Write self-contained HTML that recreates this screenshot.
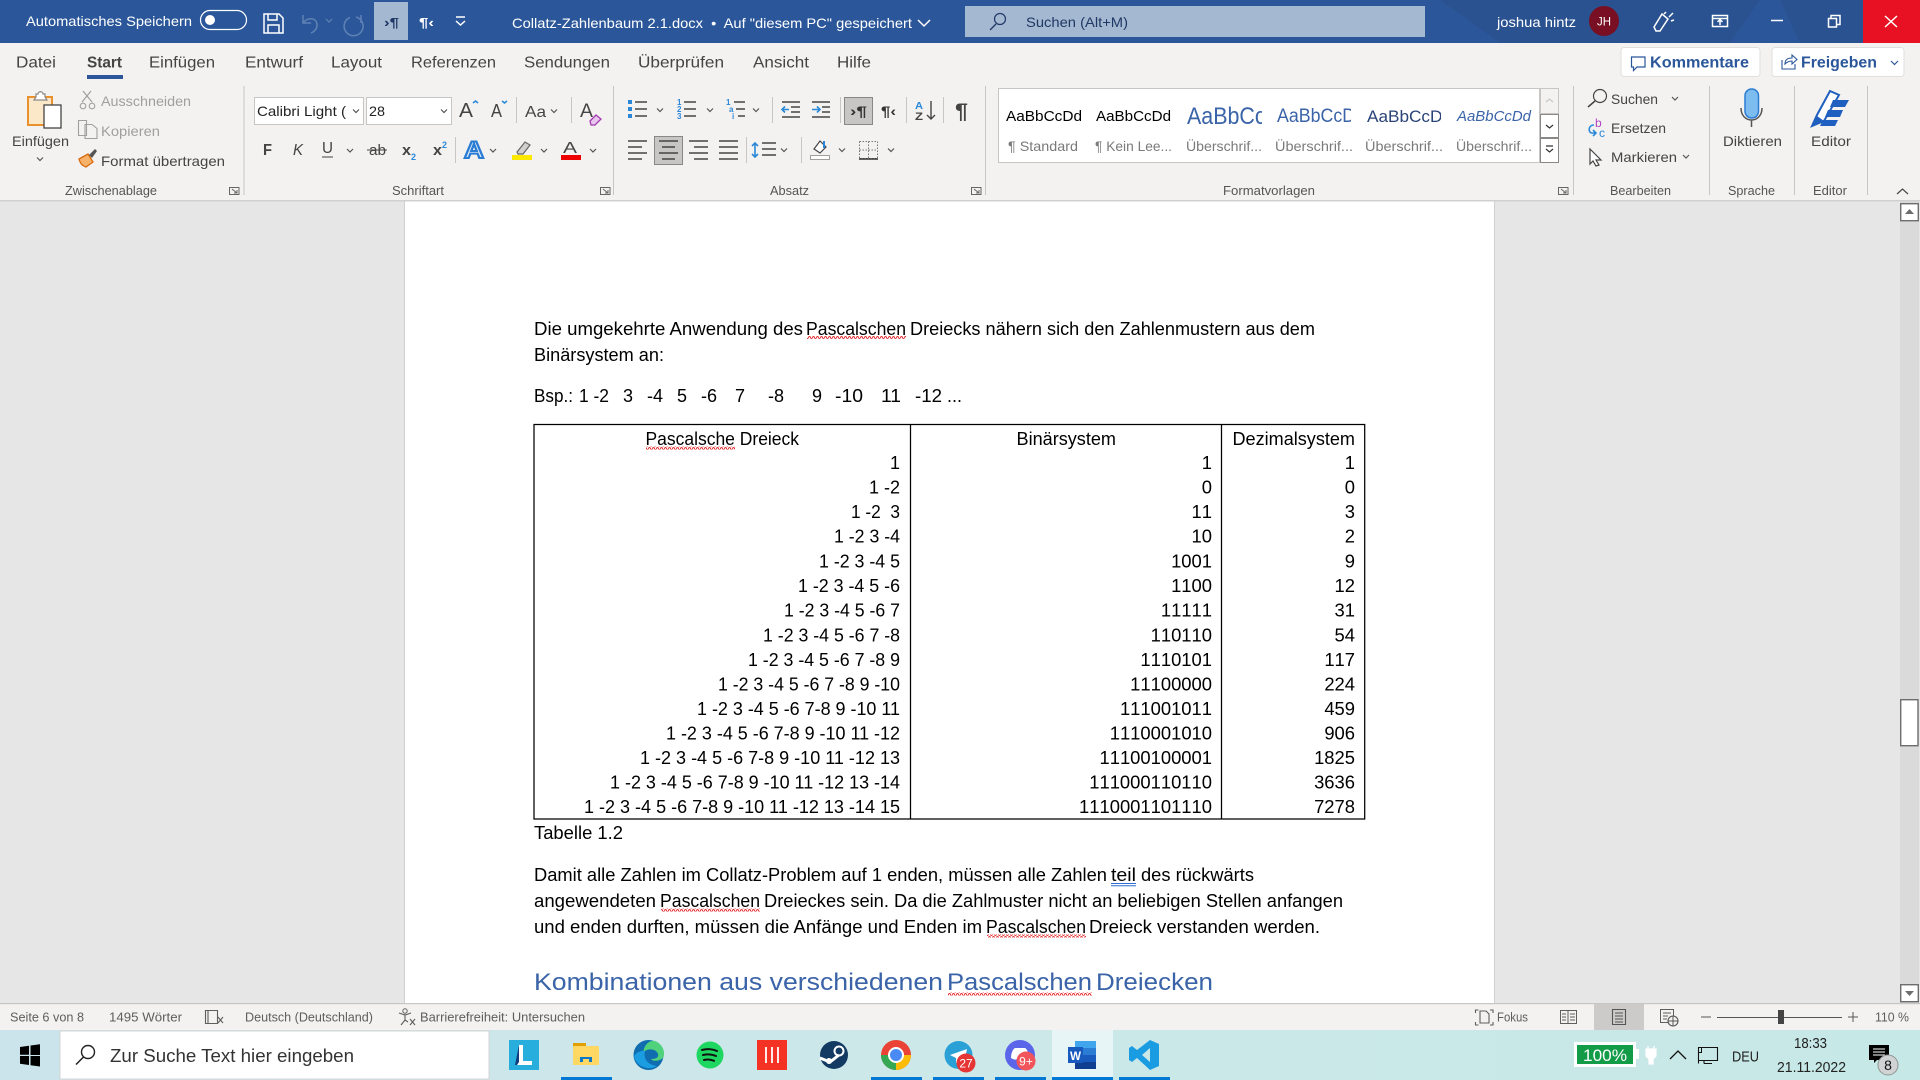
<!DOCTYPE html>
<html lang="de"><head><meta charset="utf-8"><title>Collatz-Zahlenbaum 2.1.docx</title>
<style>
html,body{margin:0;padding:0;width:1920px;height:1080px;overflow:hidden;background:#e6e6e6}
svg{display:block;position:absolute;left:0;top:0}
text{font-family:"Liberation Sans",sans-serif;font-size:14px;fill:#444;white-space:pre}
.t{fill:#fff}
.tab{font-size:16px;fill:#444}
.lab{font-size:12.5px;fill:#555}
.g{fill:#a19f9d}
.d{font-size:18px;fill:#000}
.e{text-anchor:end}
.n{font-size:18.4px;fill:#000;text-anchor:end;font-kerning:none}
.st{font-size:12.5px;fill:#605e5c}
.sv{font-size:14px;fill:#7a7a7a}
.ln{stroke:#444;stroke-width:1.4;fill:none}
.blue{stroke:#2b88d8;stroke-width:1.6;fill:none}
.ch{stroke:#555;stroke-width:1.2;fill:none}
.w{stroke:#fff;stroke-width:1.5;fill:none}
.sep{stroke:#c8c6c4;stroke-width:1}
</style></head><body>
<svg width="1920" height="1080" viewBox="0 0 1920 1080" xmlns="http://www.w3.org/2000/svg">
<defs>
<pattern id="wv" width="4" height="3" patternUnits="userSpaceOnUse"><path d="M0 2.4 L1 .6 L2 .6 L3 2.4 L4 2.4" fill="none" stroke="#e02020" stroke-width=".9"/></pattern>
<linearGradient id="tb" x1="0" x2="1" y1="0" y2="0"><stop offset="0" stop-color="#cbe3ea"/><stop offset=".5" stop-color="#cce8e9"/><stop offset="1" stop-color="#c6e8e6"/></linearGradient>
<clipPath id="c3"><rect x="1180" y="90" width="82" height="44"/></clipPath>
<clipPath id="c4"><rect x="1270" y="90" width="81" height="44"/></clipPath>
<clipPath id="c5"><rect x="1360" y="90" width="81" height="44"/></clipPath>
</defs>

<!-- title bar -->
<rect width="1920" height="43" fill="#2b579a"/>
<path d="M1440 0H1760L1730 43H1500Z M1780 0H1863V43H1800Z" fill="#2a4d85" opacity=".45"/>
<text class="t" x="26" y="26" textLength="166" lengthAdjust="spacingAndGlyphs">Automatisches Speichern</text>
<rect x="200.5" y="10.5" width="46" height="19" rx="9.5" fill="none" stroke="#fff" stroke-width="1.2"/><circle cx="210" cy="20" r="5" fill="#fff"/>
<path class="w" d="M264 14h15l4 4v15h-19zM268 14v6h9v-6M268 33v-8h11v8"/>
<path d="M303 15v8h8M303 23c4-6 14-6 14 2 0 4-3 7-6 8" fill="none" stroke="#5f82b5" stroke-width="1.5"/>
<path d="M326 19l3 3 3-3" fill="none" stroke="#5f82b5" stroke-width="1.2"/>
<path d="M361 15v8h-0M356 17a9.500 9.500 0 1 1-6 .4" fill="none" stroke="#5f82b5" stroke-width="1.5"/>
<rect x="374" y="2" width="34" height="38" fill="#a5b8d2"/>
<text x="384" y="27" style="font-size:13px;fill:#1f3864;font-weight:bold" textLength="15" lengthAdjust="spacingAndGlyphs">›¶</text>
<text class="t" x="419" y="27" style="font-size:13px;font-weight:bold" textLength="15" lengthAdjust="spacingAndGlyphs">¶‹</text>
<path class="w" d="M456 17h9M456 21l4.500 4 4.500-4" stroke-width="1.1"/>
<text class="t" x="512" y="28" textLength="400" lengthAdjust="spacingAndGlyphs">Collatz-Zahlenbaum 2.1.docx  •  Auf "diesem PC" gespeichert</text>
<path class="w" d="M918 20l6 6 6-6" stroke-width="1.2"/>
<rect x="965" y="6" width="460" height="31" fill="#a5b8d2"/>
<circle cx="1000" cy="19" r="5.500" fill="none" stroke="#1f3864" stroke-width="1.2"/><path d="M996 24l-6 6" stroke="#1f3864" stroke-width="1.3"/>
<text x="1026" y="27" style="fill:#1f3864" textLength="102" lengthAdjust="spacingAndGlyphs">Suchen (Alt+M)</text>
<text class="t" x="1497" y="27" textLength="79" lengthAdjust="spacingAndGlyphs">joshua hintz</text>
<circle cx="1604" cy="21" r="15" fill="#780f22"/>
<text class="t" x="1597" y="25.500" style="font-size:11.500px" textLength="14" lengthAdjust="spacingAndGlyphs">JH</text>
<path class="w" d="M1654 27l8-13 6 5-8 12-4 0zM1664 14l2-2M1669 17l4-4M1671 21l3-1" stroke-width="1.4"/>
<path class="w" d="M1712.500 15.500h15v11h-15zM1712.500 18.500h15M1720 25v-5M1717.500 22l2.500-2.500 2.500 2.500" stroke-width="1.2"/>
<path class="w" d="M1771 20.500h12" stroke-width="1.4"/>
<path class="w" d="M1828.500 18.500h8v8.500h-8zM1831 18v-2.500h9v9h-3" stroke-width="1.200"/>
<rect x="1863" width="57" height="43" fill="#e81123"/>
<path d="M1885 16l12 11M1897 16l-12 11" stroke="#fff" stroke-width="1.500"/>

<!-- ribbon -->
<rect y="43" width="1920" height="158" fill="#f3f2f1"/>
<rect y="200" width="1920" height="1.500" fill="#d2d0ce"/>
<text class="tab" x="16" y="67.500" textLength="40" lengthAdjust="spacingAndGlyphs">Datei</text>
<text class="tab" x="87" y="67.500" style="font-weight:bold" textLength="35" lengthAdjust="spacingAndGlyphs">Start</text>
<rect x="87" y="75" width="36" height="4" fill="#2b579a"/>
<text class="tab" x="149" y="67.500" textLength="66" lengthAdjust="spacingAndGlyphs">Einfügen</text>
<text class="tab" x="245" y="67.500" textLength="58" lengthAdjust="spacingAndGlyphs">Entwurf</text>
<text class="tab" x="331" y="67.500" textLength="51" lengthAdjust="spacingAndGlyphs">Layout</text>
<text class="tab" x="411" y="67.500" textLength="85" lengthAdjust="spacingAndGlyphs">Referenzen</text>
<text class="tab" x="524" y="67.500" textLength="86" lengthAdjust="spacingAndGlyphs">Sendungen</text>
<text class="tab" x="638" y="67.500" textLength="86" lengthAdjust="spacingAndGlyphs">Überprüfen</text>
<text class="tab" x="753" y="67.500" textLength="56" lengthAdjust="spacingAndGlyphs">Ansicht</text>
<text class="tab" x="837" y="67.500" textLength="34" lengthAdjust="spacingAndGlyphs">Hilfe</text>

<rect x="1621" y="47.500" width="139" height="29" rx="3" fill="#fff" stroke="#e1dfdd"/>
<path d="M1631.500 57h13.500v10h-8l-3.500 3.500v-3.500h-2z" fill="none" stroke="#2b579a" stroke-width="1.200"/>
<text x="1650" y="67.500" style="font-size:16px;font-weight:bold;fill:#2b579a" textLength="99" lengthAdjust="spacingAndGlyphs">Kommentare</text>
<rect x="1772" y="47.500" width="132" height="29" rx="3" fill="#fff" stroke="#e1dfdd"/>
<path d="M1782 60v9h13v-5M1785 64c0-5 3-6 7-6v-3l5 4.500-5 4.500v-3c-3 0-5 1-7 3z" fill="none" stroke="#2b579a" stroke-width="1.100"/>
<text x="1801" y="67.500" style="font-size:16px;font-weight:bold;fill:#2b579a" textLength="76" lengthAdjust="spacingAndGlyphs">Freigeben</text>
<path d="M1891 61l3.500 3.500 3.500-3.500" fill="none" stroke="#2b579a" stroke-width="1.200"/>

<!-- separators -->
<g class="sep"><path d="M244 86v109M613.500 86v109M985.500 86v109M1573.500 86v109M1709.500 86v109M1794.500 86v109M1867.500 86v109"/></g>
<!-- group labels -->
<text class="lab" x="65" y="195" textLength="92" lengthAdjust="spacingAndGlyphs">Zwischenablage</text>
<text class="lab" x="392" y="195" textLength="52" lengthAdjust="spacingAndGlyphs">Schriftart</text>
<text class="lab" x="770" y="195" textLength="39" lengthAdjust="spacingAndGlyphs">Absatz</text>
<text class="lab" x="1223" y="195" textLength="92" lengthAdjust="spacingAndGlyphs">Formatvorlagen</text>
<text class="lab" x="1610" y="195" textLength="61" lengthAdjust="spacingAndGlyphs">Bearbeiten</text>
<text class="lab" x="1728" y="195" textLength="47" lengthAdjust="spacingAndGlyphs">Sprache</text>
<text class="lab" x="1813" y="195" textLength="34" lengthAdjust="spacingAndGlyphs">Editor</text>
<g fill="none" stroke="#666" stroke-width="1">
<path d="M229.500 187.500h9.500v7h-9.500z M232 189l5 4M237 190v3h-3"/>
<path d="M600.500 187.500h9.500v7h-9.500z M603 189l5 4M608 190v3h-3"/>
<path d="M971.500 187.500h9.500v7h-9.500z M974 189l5 4M979 190v3h-3"/>
<path d="M1558.500 187.500h9.500v7h-9.500z M1561 189l5 4M1566 190v3h-3"/>
<path d="M1897 194l5.500-5 5.500 5" stroke="#444" stroke-width="1.200"/>
</g>

<!-- clipboard group -->
<path d="M28 97h24v28h-24z" fill="#fbe8c8" stroke="#e8912d" stroke-width="2"/>
<path d="M36 97v-3h2c0-3 5-3 5 0h2v3l2 3h-13z" fill="#fff" stroke="#8a8886" stroke-width="1.200"/>
<rect x="44" y="105" width="17" height="23" fill="#fff" stroke="#444" stroke-width="1.300"/>
<text x="12" y="146" textLength="57" lengthAdjust="spacingAndGlyphs">Einfügen</text>
<path class="ch" d="M37 157.500l3 3 3-3"/>
<path d="M83 91l9 11M91 91l-9 11" stroke="#a19f9d" stroke-width="1.200"/><circle cx="83" cy="106" r="2.800" fill="none" stroke="#a19f9d" stroke-width="1.100"/><circle cx="92" cy="106" r="2.800" fill="none" stroke="#a19f9d" stroke-width="1.100"/>
<text class="g" x="101" y="106" textLength="90" lengthAdjust="spacingAndGlyphs">Ausschneiden</text>
<path d="M78.500 120.500h8l0 15h-8zM85 124.500h7l5 4v10h-12z" fill="#f3f2f1" stroke="#a19f9d" stroke-width="1.100"/>
<text class="g" x="101" y="136" textLength="59" lengthAdjust="spacingAndGlyphs">Kopieren</text>
<path d="M79 159l9-5 5 8-7 5c-2-1-5-1-7-8z" fill="#f6b26b" stroke="#d86a0a" stroke-width="1.300"/><path d="M89 155l6-6 2 2-5 7z" fill="#555"/>
<text x="101" y="166" textLength="124" lengthAdjust="spacingAndGlyphs">Format übertragen</text>

<!-- font group -->
<rect x="254.500" y="97.500" width="109" height="27" fill="#fff" stroke="#c8c6c4"/>
<rect x="366.500" y="97.500" width="85" height="27" fill="#fff" stroke="#c8c6c4"/>
<text x="257" y="116" style="fill:#222" textLength="89" lengthAdjust="spacingAndGlyphs">Calibri Light (</text>
<text x="369" y="116" style="fill:#222" textLength="16" lengthAdjust="spacingAndGlyphs">28</text>
<path class="ch" d="M353 109.500l3 3 3-3M441 109.500l3 3 3-3"/>
<text x="459" y="117" style="font-size:20px" textLength="14" lengthAdjust="spacingAndGlyphs">A</text><path d="M473 103l2.500-2 2.500 2" class="blue" stroke-width="1.100"/>
<text x="491" y="117" style="font-size:18px" textLength="11" lengthAdjust="spacingAndGlyphs">A</text><path d="M502 101l2.500 2 2.500-2" class="blue" stroke-width="1.100"/>
<path class="sep" d="M516.500 97v26M571.500 97v26M455.500 137v26"/>
<text x="525" y="117" style="font-size:16px" textLength="21" lengthAdjust="spacingAndGlyphs">Aa</text>
<path class="ch" d="M551 109.500l3 3 3-3"/>
<text x="580" y="117" style="font-size:19px" textLength="13" lengthAdjust="spacingAndGlyphs">A</text>
<path d="M590 121l6-6 5 4-6 6h-4z" fill="#e9c6ee" stroke="#a33ab0" stroke-width="1.300"/>
<text x="263" y="155" style="font-size:16px;font-weight:bold" textLength="9" lengthAdjust="spacingAndGlyphs">F</text>
<text x="293" y="155" style="font-size:16px;font-style:italic" textLength="10" lengthAdjust="spacingAndGlyphs">K</text>
<text x="322" y="153" style="font-size:16px" textLength="11" lengthAdjust="spacingAndGlyphs">U</text><path d="M322 157h11" stroke="#444" stroke-width="1"/>
<path class="ch" d="M347 149l3 3 3-3"/>
<text x="369" y="155" style="font-size:15px" textLength="17" lengthAdjust="spacingAndGlyphs">ab</text><path d="M367 150h20" stroke="#444" stroke-width="1"/>
<text x="402" y="155" style="font-size:15px;font-weight:bold" textLength="9" lengthAdjust="spacingAndGlyphs">x</text><text x="411" y="160" style="font-size:9px;fill:#2b88d8;font-weight:bold">2</text>
<text x="433" y="155" style="font-size:15px;font-weight:bold" textLength="9" lengthAdjust="spacingAndGlyphs">x</text><text x="442" y="148" style="font-size:9px;fill:#2b88d8;font-weight:bold">2</text>
<text x="464" y="158" style="font-size:24px;font-weight:bold;fill:#dbeaf8;stroke:#2b7cd3;stroke-width:2" textLength="20" lengthAdjust="spacingAndGlyphs">A</text>
<path class="ch" d="M490 149l3 3 3-3M541 149l3 3 3-3M590 149l3 3 3-3"/>
<path d="M517 152l8-10 5 3-7 9h-5z" fill="#d2d0ce" stroke="#666" stroke-width="1.200"/>
<rect x="512" y="155" width="20" height="5" fill="#ffe800"/>
<text x="563" y="153" style="font-size:16px" textLength="14" lengthAdjust="spacingAndGlyphs">A</text>
<rect x="561" y="155" width="20" height="5" fill="#ee0000"/>

<!-- paragraph group -->
<g class="ln">
<path d="M635 102h12M635 109h12M635 116h12"/>
<path d="M684 102h12M684 109h12M684 116h12"/>
<path d="M734 102h11M736 109h9M738 116h7"/>
<path d="M782 102h18M791 107h9M791 112h9M782 117h18"/>
<path d="M812 102h18M822 107h8M822 112h8M812 117h18"/>
<path d="M628 141h19M628 147h14M628 153h19M628 159h14"/>
<path d="M689 141h19M694 147h14M689 153h19M694 159h14"/>
<path d="M719 141h19M719 147h19M719 153h19M719 159h19"/>
<path d="M762 143h14M762 149h14M762 155h14"/>
</g>
<g fill="#2b88d8"><rect x="628" y="100" width="4" height="4"/><rect x="628" y="107" width="4" height="4"/><rect x="628" y="114" width="4" height="4"/></g>
<g><text x="677" y="105" style="font-size:8px;fill:#2b88d8;font-weight:bold">1</text><text x="677" y="112" style="font-size:8px;fill:#2b88d8;font-weight:bold">2</text><text x="677" y="119" style="font-size:8px;fill:#2b88d8;font-weight:bold">3</text>
<text x="726" y="105" style="font-size:8px;fill:#2b88d8;font-weight:bold">1</text><text x="729" y="112" style="font-size:8px;fill:#2b88d8;font-weight:bold">a</text><text x="732" y="119" style="font-size:8px;fill:#2b88d8;font-weight:bold">i</text></g>
<path class="ch" d="M657 108.500l3 3 3-3M707 108.500l3 3 3-3M753 108.500l3 3 3-3M781 148.500l3 3 3-3M839 148.500l3 3 3-3M888 148.500l3 3 3-3"/>
<path class="blue" d="M789 109.500h-7M785 106.500l-3 3 3 3M812 109.500h8M817 106.500l3 3-3 3M755 143v14M752 146l3-3 3 3M752 154l3 3 3-3"/>
<path class="sep" d="M772.500 97v26M840.500 97v26M906.500 97v26M943.500 97v26M746.500 137v26M801.500 137v26"/>
<rect x="844.500" y="97.500" width="28" height="27" fill="#c8c6c4" stroke="#8a8886"/>
<text x="850" y="116" style="font-size:14px;font-weight:bold;fill:#333" textLength="17" lengthAdjust="spacingAndGlyphs">›¶</text>
<text x="881" y="116" style="font-size:14px;font-weight:bold;fill:#333" textLength="15" lengthAdjust="spacingAndGlyphs">¶‹</text>
<text x="915" y="109" style="font-size:10px;fill:#2b88d8;font-weight:bold" textLength="8" lengthAdjust="spacingAndGlyphs">A</text>
<text x="915" y="120" style="font-size:11px;font-weight:bold" textLength="8" lengthAdjust="spacingAndGlyphs">Z</text>
<path class="ln" d="M931 101v18M927 115l4 4 4-4"/>
<text x="955" y="118" style="font-size:21px;font-weight:bold" textLength="13" lengthAdjust="spacingAndGlyphs">¶</text>
<rect x="654.500" y="136.500" width="28" height="28" fill="#c8c6c4" stroke="#8a8886"/>
<path class="ln" d="M659 141h19M662 147h13M659 153h19M662 159h13"/>
<path d="M814 149l6-8 6 6-6 6z" fill="#fff" stroke="#444" stroke-width="1.200"/><path d="M824 141v7" stroke="#2b88d8" stroke-width="2"/>
<rect x="810.500" y="155.500" width="19" height="4" fill="#fff" stroke="#a19f9d"/>
<path d="M859.500 141.500h18v17h-18M868.500 141.500v17M859.500 150h18M859.500 141.500v17M877.500 141.500v17" fill="none" stroke="#777" stroke-width="1" stroke-dasharray="1.500 1.500"/>
<path d="M859 159h19" stroke="#333" stroke-width="1.500"/>

<!-- styles gallery -->
<rect x="998.500" y="88.500" width="541" height="74" fill="#fff" stroke="#c8c6c4"/>
<text x="1006" y="121" style="font-size:15px;fill:#000" textLength="76" lengthAdjust="spacingAndGlyphs">AaBbCcDd</text>
<text x="1096" y="121" style="font-size:15px;fill:#000" textLength="75" lengthAdjust="spacingAndGlyphs">AaBbCcDd</text>
<g clip-path="url(#c3)"><text x="1187" y="124" style="font-size:24px;fill:#3a63a8" textLength="106" lengthAdjust="spacingAndGlyphs">AaBbCcDd</text></g>
<g clip-path="url(#c4)"><text x="1277" y="122" style="font-size:19px;fill:#3a63a8" textLength="88" lengthAdjust="spacingAndGlyphs">AaBbCcDd</text></g>
<g clip-path="url(#c5)"><text x="1367" y="122" style="font-size:17px;fill:#2a4478" textLength="85" lengthAdjust="spacingAndGlyphs">AaBbCcDd</text></g>
<text x="1457" y="121" style="font-size:15px;fill:#3a63a8;font-style:italic" textLength="74" lengthAdjust="spacingAndGlyphs">AaBbCcDd</text>
<text x="1008" y="151" class="sv" textLength="70" lengthAdjust="spacingAndGlyphs">¶ Standard</text>
<text x="1095" y="151" class="sv" textLength="77" lengthAdjust="spacingAndGlyphs">¶ Kein Lee...</text>
<text x="1186" y="151" class="sv" textLength="76" lengthAdjust="spacingAndGlyphs">Überschrif...</text>
<text x="1275" y="151" class="sv" textLength="78" lengthAdjust="spacingAndGlyphs">Überschrif...</text>
<text x="1365" y="151" class="sv" textLength="78" lengthAdjust="spacingAndGlyphs">Überschrif...</text>
<text x="1456" y="151" class="sv" textLength="76" lengthAdjust="spacingAndGlyphs">Überschrif...</text>
<rect x="1540.500" y="88.500" width="18" height="25" fill="#f3f2f1" stroke="#c8c6c4"/>
<rect x="1540.500" y="114.500" width="18" height="23" fill="#fff" stroke="#8a8886"/>
<rect x="1540.500" y="138.500" width="18" height="24" fill="#fff" stroke="#8a8886"/>
<path d="M1546 102l3.500-3 3.500 3" fill="none" stroke="#c8c6c4" stroke-width="1.200"/>
<path d="M1546 125l3.500 3 3.500-3M1546 146h7M1546 149l3.500 3 3.500-3" fill="none" stroke="#333" stroke-width="1.200"/>

<!-- edit group -->
<circle cx="1600" cy="96" r="6.500" fill="none" stroke="#444" stroke-width="1.200"/><path d="M1595 101l-7 6" stroke="#444" stroke-width="1.500"/>
<text x="1611" y="104" textLength="47" lengthAdjust="spacingAndGlyphs">Suchen</text>
<path class="ch" d="M1672 97l3 3 3-3"/>
<text x="1595" y="127" style="font-size:12px;fill:#b146c2">b</text>
<text x="1599" y="137" style="font-size:12px;fill:#2b88d8">c</text>
<path class="blue" d="M1594 125c-6 0-6 8-2 8h4M1593 130l3 3-3 3" stroke-width="1.200"/>
<text x="1611" y="133" textLength="55" lengthAdjust="spacingAndGlyphs">Ersetzen</text>
<path d="M1590 149l11 11h-5l3 5-3 1-3-5-3 3z" fill="#fff" stroke="#444" stroke-width="1.200"/>
<text x="1611" y="162" textLength="66" lengthAdjust="spacingAndGlyphs">Markieren</text>
<path class="ch" d="M1683 155l3 3 3-3"/>

<!-- dictate -->
<rect x="1745" y="89" width="13.500" height="29" rx="6.700" fill="#7cbcee" stroke="#2b7cd3" stroke-width="1.500"/>
<path d="M1741 108c0 16 21 16 21 0M1751.500 120v7" fill="none" stroke="#555" stroke-width="1.500"/>
<text x="1723" y="146" textLength="59" lengthAdjust="spacingAndGlyphs">Diktieren</text>
<path d="M1812 126l5-11 13-24 9 4-15 26z" fill="#fff" stroke="#1f5fbf" stroke-width="2"/>
<path d="M1812 127l12-6-7-5z" fill="#1f5fbf"/>
<path d="M1833 100h16l-4 7h-15zM1828 110h15l-3 7h-15zM1823 120h15l-3 6h-15z" fill="#1f5fbf"/>
<text x="1811" y="146" textLength="40" lengthAdjust="spacingAndGlyphs">Editor</text>

<!-- document -->
<rect y="201.500" width="1920" height="802" fill="#e6e6e6"/>
<rect x="405" y="201.500" width="1089" height="802" fill="#fff"/>
<rect x="404" y="201.500" width="1" height="802" fill="#d0d0d0"/><rect x="1494" y="201.500" width="1" height="802" fill="#d0d0d0"/>
<!-- scrollbar -->
<rect x="1900" y="201.500" width="19" height="802" fill="#dadada"/>
<rect x="1900.700" y="203.700" width="17.600" height="17" fill="#fff" stroke="#6d6d6d" stroke-width="1.400"/>
<path d="M1905 214l4.500-5 4.500 5z" fill="#6d6d6d"/>
<rect x="1900.700" y="699.700" width="17.300" height="46" fill="#fff" stroke="#6d6d6d" stroke-width="1.400"/>
<rect x="1900.700" y="984.700" width="17.600" height="17" fill="#fff" stroke="#6d6d6d" stroke-width="1.400"/>
<path d="M1905 991l4.500 5 4.500-5z" fill="#6d6d6d"/>

<text class="d" x="534" y="335" textLength="269" lengthAdjust="spacingAndGlyphs">Die umgekehrte Anwendung des</text>
<text class="d" x="806" y="335" textLength="100" lengthAdjust="spacingAndGlyphs">Pascalschen</text>
<text class="d" x="910" y="335" textLength="405" lengthAdjust="spacingAndGlyphs">Dreiecks nähern sich den Zahlenmustern aus dem</text>
<rect x="807" y="336" width="99" height="3" fill="url(#wv)"/>
<text class="d" x="534" y="361" textLength="130" lengthAdjust="spacingAndGlyphs">Binärsystem an:</text>
<g>
<text class="d" x="534" y="402" textLength="39" lengthAdjust="spacingAndGlyphs">Bsp.:</text>
<text class="d" x="579" y="402" textLength="30" lengthAdjust="spacingAndGlyphs">1 -2</text>
<text class="d" x="623" y="402">3</text><text class="d" x="647" y="402">-4</text>
<text class="d" x="677" y="402">5</text><text class="d" x="701" y="402">-6</text>
<text class="d" x="735" y="402">7</text><text class="d" x="768" y="402">-8</text>
<text class="d" x="812" y="402">9</text><text class="d" x="835" y="402" textLength="28" lengthAdjust="spacingAndGlyphs">-10</text>
<text class="d" x="881" y="402" textLength="20" lengthAdjust="spacingAndGlyphs">11</text><text class="d" x="915" y="402" textLength="27" lengthAdjust="spacingAndGlyphs">-12</text>
<text class="d" x="947" y="402" textLength="15" lengthAdjust="spacingAndGlyphs">...</text>
</g>

<!-- table -->
<rect x="534" y="424.500" width="830.700" height="394.500" fill="none" stroke="#000" stroke-width="1.250"/>
<path d="M910.500 424v395M1221.500 424v395" stroke="#000" stroke-width="1.250"/>
<text class="d" x="645.500" y="445" textLength="153.500" lengthAdjust="spacingAndGlyphs">Pascalsche Dreieck</text>
<rect x="646" y="446.500" width="89" height="3" fill="url(#wv)"/>
<text class="d" x="1016.500" y="445" textLength="99.500" lengthAdjust="spacingAndGlyphs">Binärsystem</text>
<text class="d" x="1232.500" y="445" textLength="122.500" lengthAdjust="spacingAndGlyphs">Dezimalsystem</text>

<g>
<text class="d e" x="900" y="469">1</text><text class="n" x="1212" y="469">1</text><text class="n" x="1355" y="469">1</text>
<text class="d e" x="900" y="493.500">1 -2</text><text class="n" x="1212" y="493.500">0</text><text class="n" x="1355" y="493.500">0</text>
<text class="d" x="851" y="518" textLength="49" lengthAdjust="spacingAndGlyphs">1 -2  3</text><text class="n" x="1212" y="518">11</text><text class="n" x="1355" y="518">3</text>
<text class="d" x="834" y="542.500" textLength="66" lengthAdjust="spacingAndGlyphs">1 -2 3 -4</text><text class="n" x="1212" y="542.500">10</text><text class="n" x="1355" y="542.500">2</text>
<text class="d" x="819" y="567.500" textLength="81" lengthAdjust="spacingAndGlyphs">1 -2 3 -4 5</text><text class="n" x="1212" y="567.500">1001</text><text class="n" x="1355" y="567.500">9</text>
<text class="d" x="798" y="592" textLength="102" lengthAdjust="spacingAndGlyphs">1 -2 3 -4 5 -6</text><text class="n" x="1212" y="592">1100</text><text class="n" x="1355" y="592">12</text>
<text class="d" x="784" y="616.500" textLength="116" lengthAdjust="spacingAndGlyphs">1 -2 3 -4 5 -6 7</text><text class="n" x="1212" y="616.500">11111</text><text class="n" x="1355" y="616.500">31</text>
<text class="d" x="763" y="641.500" textLength="137" lengthAdjust="spacingAndGlyphs">1 -2 3 -4 5 -6 7 -8</text><text class="n" x="1212" y="641.500">110110</text><text class="n" x="1355" y="641.500">54</text>
<text class="d" x="748" y="666" textLength="152" lengthAdjust="spacingAndGlyphs">1 -2 3 -4 5 -6 7 -8 9</text><text class="n" x="1212" y="666">1110101</text><text class="n" x="1355" y="666">117</text>
<text class="d" x="718" y="690.500" textLength="182" lengthAdjust="spacingAndGlyphs">1 -2 3 -4 5 -6 7 -8 9 -10</text><text class="n" x="1212" y="690.500">11100000</text><text class="n" x="1355" y="690.500">224</text>
<text class="d" x="697" y="715" textLength="203" lengthAdjust="spacingAndGlyphs">1 -2 3 -4 5 -6 7-8 9 -10 11</text><text class="n" x="1212" y="715">111001011</text><text class="n" x="1355" y="715">459</text>
<text class="d" x="666" y="739.500" textLength="234" lengthAdjust="spacingAndGlyphs">1 -2 3 -4 5 -6 7-8 9 -10 11 -12</text><text class="n" x="1212" y="739.500">1110001010</text><text class="n" x="1355" y="739.500">906</text>
<text class="d" x="640" y="764" textLength="260" lengthAdjust="spacingAndGlyphs">1 -2 3 -4 5 -6 7-8 9 -10 11 -12 13</text><text class="n" x="1212" y="764">11100100001</text><text class="n" x="1355" y="764">1825</text>
<text class="d" x="610" y="788.500" textLength="290" lengthAdjust="spacingAndGlyphs">1 -2 3 -4 5 -6 7-8 9 -10 11 -12 13 -14</text><text class="n" x="1212" y="788.500">111000110110</text><text class="n" x="1355" y="788.500">3636</text>
<text class="d" x="584" y="813" textLength="316" lengthAdjust="spacingAndGlyphs">1 -2 3 -4 5 -6 7-8 9 -10 11 -12 13 -14 15</text><text class="n" x="1212" y="813">1110001101110</text><text class="n" x="1355" y="813">7278</text>
</g>
<text class="d" x="534" y="839" textLength="89" lengthAdjust="spacingAndGlyphs">Tabelle 1.2</text>

<text class="d" x="534" y="881" textLength="573" lengthAdjust="spacingAndGlyphs">Damit alle Zahlen im Collatz-Problem auf 1 enden, müssen alle Zahlen</text>
<text class="d" x="1111" y="881" textLength="25" lengthAdjust="spacingAndGlyphs">teil</text>
<text class="d" x="1141" y="881" textLength="113" lengthAdjust="spacingAndGlyphs">des rückwärts</text>
<path d="M1111 883.500h25M1111 885.700h25" stroke="#2f6fd0" stroke-width="1"/>
<text class="d" x="534" y="907" textLength="122" lengthAdjust="spacingAndGlyphs">angewendeten</text>
<text class="d" x="660" y="907" textLength="100" lengthAdjust="spacingAndGlyphs">Pascalschen</text>
<text class="d" x="764" y="907" textLength="579" lengthAdjust="spacingAndGlyphs">Dreieckes sein. Da die Zahlmuster nicht an beliebigen Stellen anfangen</text>
<rect x="661" y="908.500" width="99" height="3" fill="url(#wv)"/>
<text class="d" x="534" y="933" textLength="448" lengthAdjust="spacingAndGlyphs">und enden durften, müssen die Anfänge und Enden im</text>
<text class="d" x="986" y="933" textLength="100" lengthAdjust="spacingAndGlyphs">Pascalschen</text>
<text class="d" x="1089" y="933" textLength="231" lengthAdjust="spacingAndGlyphs">Dreieck verstanden werden.</text>
<rect x="987" y="934.500" width="99" height="3" fill="url(#wv)"/>
<text x="534" y="990" style="font-size:24.500px;fill:#3a63a8" textLength="409" lengthAdjust="spacingAndGlyphs">Kombinationen aus verschiedenen</text>
<text x="947" y="990" style="font-size:24.500px;fill:#3a63a8" textLength="145" lengthAdjust="spacingAndGlyphs">Pascalschen</text>
<text x="1096" y="990" style="font-size:24.500px;fill:#3a63a8" textLength="117" lengthAdjust="spacingAndGlyphs">Dreiecken</text>
<rect x="948" y="992.500" width="144" height="3" fill="url(#wv)"/>

<!-- status bar -->
<rect y="1003" width="1920" height="27" fill="#f3f2f1"/>
<rect y="1003" width="1920" height="1.200" fill="#c8c6c4"/>
<rect x="1594" y="1004" width="50" height="26" fill="#cdcbc9"/>
<text class="st" x="10" y="1021.500" textLength="74" lengthAdjust="spacingAndGlyphs">Seite 6 von 8</text>
<text class="st" x="109" y="1021.500" textLength="73" lengthAdjust="spacingAndGlyphs">1495 Wörter</text>
<path d="M205.500 1010.500h12v13h-12zM208 1010.500v13M218 1017l5 6M223 1017l-5 6" fill="none" stroke="#605e5c" stroke-width="1.100"/>
<text class="st" x="245" y="1021.500" textLength="128" lengthAdjust="spacingAndGlyphs">Deutsch (Deutschland)</text>
<circle cx="405" cy="1011" r="2.200" fill="none" stroke="#605e5c"/><path d="M399 1013l6 2 6-2M405 1015v5l-4 5M405 1020l3 2M410 1019l5 6M415 1019l-5 6" fill="none" stroke="#605e5c" stroke-width="1.100"/>
<text class="st" x="420" y="1021.500" textLength="165" lengthAdjust="spacingAndGlyphs">Barrierefreiheit: Untersuchen</text>
<path d="M1475.500 1013v-3h3M1490 1010h3v3M1475.500 1022v3h3M1490 1025h3v-3M1480 1011h6l3 3v9h-9z" fill="none" stroke="#605e5c" stroke-width="1.100"/>
<text class="st" x="1497" y="1021.500" textLength="31" lengthAdjust="spacingAndGlyphs">Fokus</text>
<path d="M1560.500 1010.500h7.500v13h-7.500zM1568 1010.500h8.500v13h-8.500zM1562 1014h4M1562 1017h4M1562 1020h4M1570 1014h5M1570 1017h5M1570 1020h5" fill="none" stroke="#605e5c" stroke-width="1"/>
<path d="M1612.500 1009.500h13v15h-13zM1615 1013h8M1615 1016h8M1615 1019h8M1615 1022h8" fill="none" stroke="#555" stroke-width="1.100"/>
<path d="M1660.500 1009.500h13v13h-13zM1663 1013h8M1663 1016h5M1663 1019h4" fill="none" stroke="#605e5c" stroke-width="1"/>
<circle cx="1673" cy="1021" r="5" fill="#f3f2f1" stroke="#555" stroke-width="1.100"/><path d="M1668 1021h10M1673 1016v10" stroke="#555"/>
<path d="M1701 1017h10M1717 1017.500h125M1848 1017h10M1853 1012v10" stroke="#555" stroke-width="1"/>
<rect x="1778" y="1010" width="6" height="14" fill="#444"/>
<text class="st" x="1875" y="1021.500" textLength="34" lengthAdjust="spacingAndGlyphs">110 %</text>

<!-- taskbar -->
<rect y="1030" width="1920" height="50" fill="url(#tb)"/>
<path d="M20 1047l9-1.300v9h-9zM30.500 1045.500l9.500-1.300v10.800h-9.500zM20 1056h9v9l-9-1.300zM30.500 1056h9.500v10.500l-9.500-1.300z" fill="#000"/>
<rect x="60" y="1031" width="429" height="48" fill="#fff" stroke="#d5d5d5"/>
<circle cx="88" cy="1052" r="6.500" fill="none" stroke="#222" stroke-width="1.400"/><path d="M83.500 1057l-7.500 7.500" stroke="#222" stroke-width="1.500"/>
<text x="110" y="1062" style="font-size:18px;fill:#333" textLength="244" lengthAdjust="spacingAndGlyphs">Zur Suche Text hier eingeben</text>

<!-- apps -->
<rect x="509" y="1040" width="30" height="30" fill="#27aedc"/>
<path d="M519 1045h4v16h9v4h-15z" fill="#fff"/><path d="M519 1045l-4 20h2l2-3z" fill="#0f3d80"/>
<rect x="573" y="1043" width="13" height="4" fill="#e0a100"/><rect x="573" y="1046" width="26" height="19" rx="1" fill="#ffd863"/>
<path d="M580 1062v-5h12v5h-3v-3h-6v3z" fill="#0b78c9"/>
<circle cx="648.500" cy="1055" r="15" fill="#0f6db0"/><path d="M655 1041c8 3 11 12 8 17-3 3-10 4-12 1 4 0 8-1 7-5-2-6-12-6-15-1 1-7 5-13 12-12z" fill="#4fd27b"/><path d="M645 1051c-2 8 3 14 12 15-8 5-21 1-23-10 2-3 7-6 11-5z" fill="#1b9de2"/>
<ellipse cx="710" cy="1055" rx="13.500" ry="13.500" fill="#1ed760"/><path d="M702 1050c5-1.500 11-1 15 1M703 1055c4-1 9-.8 13 1M704 1060c3-.8 7-.6 10 .8" stroke="#111" stroke-width="2" fill="none" stroke-linecap="round"/>
<rect x="757" y="1040" width="30" height="30" fill="#f43325"/>
<path d="M766 1047v16M772 1047v16M778 1047v16" stroke="#fff" stroke-width="1.800"/>
<circle cx="834" cy="1055" r="14" fill="#123a63"/><path d="M820 1058l10 4 9-7" stroke="#fff" stroke-width="3" fill="none"/><circle cx="839" cy="1051" r="4.500" fill="none" stroke="#fff" stroke-width="2"/><circle cx="829" cy="1061" r="3" fill="#fff"/>
<circle cx="896" cy="1055" r="15" fill="#ea4335"/><path d="M896 1055l-13 7.500a15 15 0 0 0 13 7.500z" fill="#34a853"/><path d="M881 1055a15 15 0 0 0 2 7.500l13 7.500 7-15z" fill="#34a853"/><path d="M896 1055h15a15 15 0 0 1-15 15z" fill="#fbbc05"/><circle cx="896" cy="1055" r="7" fill="#4a8af4" stroke="#fff" stroke-width="2"/>
<circle cx="958.500" cy="1055" r="14" fill="#2aa1d6"/><path d="M950 1055l17-6-3 14-5-3-3 3v-5z" fill="#fff"/>
<circle cx="966" cy="1063" r="9.500" fill="#e53535"/><text class="t" x="966" y="1067.500" text-anchor="middle" style="font-size:12px">27</text>
<circle cx="1020" cy="1055" r="15" fill="#5a65ea"/><path d="M1011 1058c0-5 2-9 4-10h10c2 1 4 5 4 10-3 2-5 2-6 1l-1-2h-4l-1 2c-1 1-3 1-6-1z" fill="#fff"/>
<circle cx="1026" cy="1061" r="9.500" fill="#f2545b"/><text class="t" x="1026" y="1065.500" text-anchor="middle" style="font-size:12px">9+</text>
<rect x="1052" y="1030" width="61" height="50" fill="#e8f5f6"/>
<path d="M1075 1041h18v7h-18z" fill="#41a5ee"/><path d="M1075 1048h21v7h-21z" fill="#2b7cd3"/><path d="M1075 1055h21v7h-21z" fill="#185abd"/><path d="M1075 1062h21v7h-21z" fill="#103f91"/><rect x="1093" y="1041" width="3" height="7" fill="#41a5ee"/>
<rect x="1068" y="1047" width="15" height="16" fill="#185abd"/><text class="t" x="1070" y="1060" style="font-size:12px;font-weight:bold" textLength="11" lengthAdjust="spacingAndGlyphs">W</text>
<path d="M1150 1040l9 4v22l-9 4-13-12-5 4-3-2v-12l3-2 5 4zM1150 1048l-8 7 8 7z" fill="#1a9ce3" fill-rule="evenodd"/>
<g fill="#0078d4"><rect x="561" y="1077" width="51" height="3"/><rect x="871" y="1077" width="51" height="3"/><rect x="933" y="1077" width="51" height="3"/><rect x="995" y="1077" width="51" height="3"/><rect x="1052" y="1077" width="61" height="3"/><rect x="1119" y="1077" width="51" height="3"/></g>

<!-- tray -->
<rect x="1574" y="1042" width="62" height="25" fill="#fff"/><rect x="1577" y="1045" width="56" height="19" fill="#129c48"/><rect x="1636" y="1049" width="3" height="10" fill="#fff"/>
<text class="t" x="1583" y="1061" style="font-size:17px" textLength="44" lengthAdjust="spacingAndGlyphs">100%</text>
<path d="M1646 1049h10v7l-3 3v5h-4v-5l-3-3zM1648 1046v3M1654 1046v3" fill="#fff" stroke="#fff" stroke-width="1.200"/>
<path d="M1670 1059l8-8 8 8" fill="none" stroke="#111" stroke-width="1.300"/>
<path d="M1698.500 1047.500h19v13h-19M1698.500 1047.500v16M1704 1060.500v3M1704 1063.500h8" fill="none" stroke="#111" stroke-width="1.100"/><rect x="1698.500" y="1047.500" width="3" height="5" fill="none" stroke="#111" stroke-width="1"/>
<text x="1732" y="1061.500" style="font-size:14.500px;fill:#222" textLength="27" lengthAdjust="spacingAndGlyphs">DEU</text>
<text x="1794" y="1048" style="font-size:14.500px;fill:#222" textLength="33" lengthAdjust="spacingAndGlyphs">18:33</text>
<text x="1777" y="1072" style="font-size:14.500px;fill:#222" textLength="69" lengthAdjust="spacingAndGlyphs">21.11.2022</text>
<path d="M1869 1045h20v15h-12l-3 3v-3h-5z" fill="#000"/><path d="M1873 1049h12M1873 1052h12M1873 1055h12" stroke="#fff" stroke-width="1"/>
<circle cx="1888" cy="1065" r="10" fill="#cfd3d3" stroke="#8f9494" stroke-width="1"/>
<text x="1888" y="1070" text-anchor="middle" style="font-size:14px;fill:#111">8</text>
</svg>
</body></html>
